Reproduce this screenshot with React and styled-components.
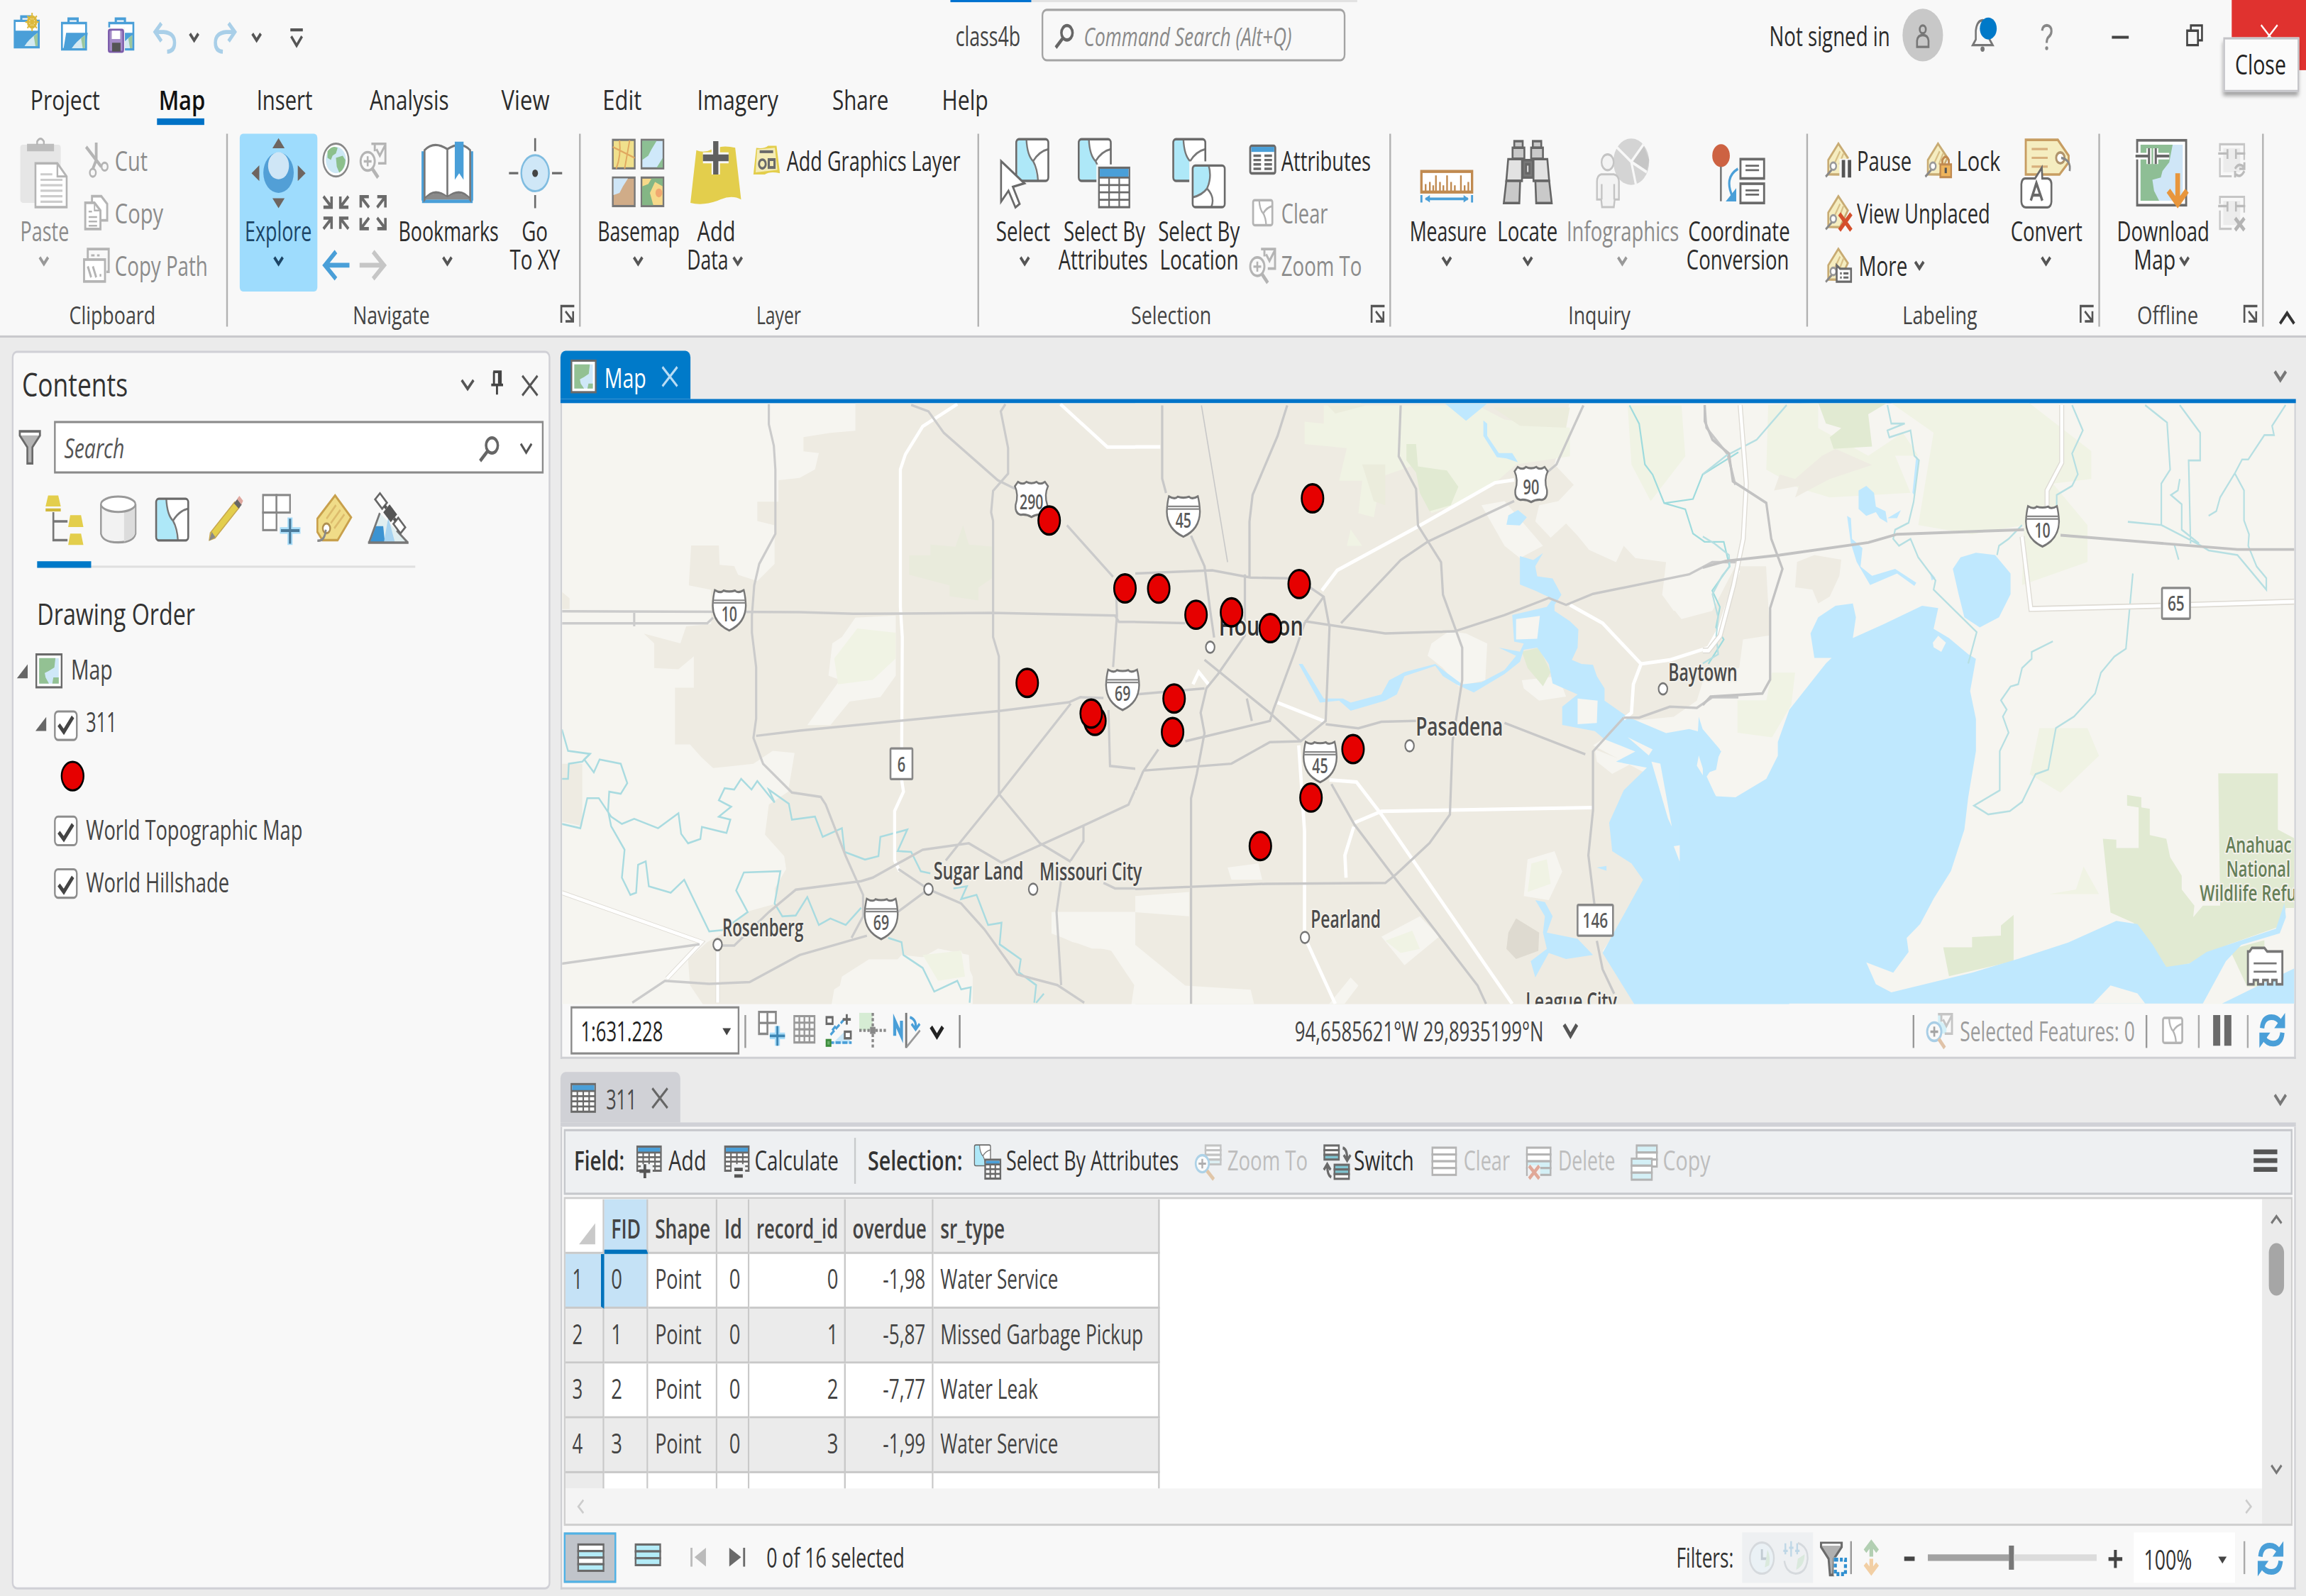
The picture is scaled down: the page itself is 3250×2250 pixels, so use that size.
import React, { useLayoutEffect, useRef, useState } from "react";
import styled, { createGlobalStyle } from "styled-components";

/* The window is laid out at 1366 x 728 and stretched to the display. */
const Global = createGlobalStyle`
  html, body { margin: 0; padding: 0; background: #ebebeb; }
  * { box-sizing: border-box; }
`;
const Display = styled.div`
  width: 3250px;
  height: 2250px;
  overflow: hidden;
`;
const Window = styled.div`
  width: 1366px;
  height: 728px;
  transform: scale(2.3792, 3.0907);
  transform-origin: 0 0;
  overflow: hidden;
  background: #ebebeb;
  color: #323232;
  font-family: "Open Sans", "Noto Sans", sans-serif;
  font-size: 12.4px;
  display: flex;
  flex-direction: column;
`;

/* ---------- text ---------- */
const TextBox = styled.span`
  display: inline-block;
  flex: none;
  width: ${(p) => p.$w}px;
  margin-left: ${(p) => p.$ml || 0}px;
  line-height: 13px;
  white-space: nowrap;
  font-size: ${(p) => p.$fs || 12.4}px;
  font-weight: ${(p) => p.$weight || 400};
  font-style: ${(p) => (p.$italic ? "italic" : "normal")};
  color: ${(p) => p.$color || "inherit"};
`;
const TextInk = styled.span`
  display: inline-block;
  margin-left: -0.6px;
  transform-origin: 0 50%;
`;
function T({ w, children, ml, fs, weight, italic, color }) {
  const ink = useRef(null);
  const [k, setK] = useState(1);
  useLayoutEffect(() => {
    const natural = ink.current.offsetWidth;
    const exact = ink.current.getBoundingClientRect().width / 2.3792;
    setK((w + 1.2) / (exact || natural));
  }, [w]);
  return (
    <TextBox $w={w} $ml={ml} $fs={fs} $weight={weight} $italic={italic} $color={color}>
      <TextInk ref={ink} style={{ transform: `scaleX(${k})` }}>{children}</TextInk>
    </TextBox>
  );
}

/* ---------- icons ---------- */
const Svg = styled.svg`
  display: block;
  flex: none;
  overflow: visible;
  width: ${(p) => p.$w}px;
  height: ${(p) => p.$h}px;
  margin-left: ${(p) => p.$ml || 0}px;
  margin-top: ${(p) => p.$mt || 0}px;
  opacity: ${(p) => p.$o || 1};
`;
const I = ({ w = 16, h, ml, mt, o, children }) => (
  <Svg $w={w} $h={h || w} $ml={ml} $mt={mt} $o={o} viewBox={`0 0 ${w} ${h || w}`} fill="none">
    {children}
  </Svg>
);
const G = "#6a6a6a";
const LG = "#b4b4b4";
const BL = "#4a9fd8";
const CY = "#aee8f8";
const YE = "#e3ce4c";

const Chev = ({ c = "#555", ml, mt, w = 6, h = 4, sw = 1.5 }) => (
  <I w={w} h={h} ml={ml} mt={mt}><path d={`M.5 .4L${w / 2} ${h - 0.6}L${w - 0.5} .4`} stroke={c} strokeWidth={sw} /></I>
);
const Cross = ({ c = "#555", ml, mt, s = 10, sw = 1.2 }) => (
  <I w={s} ml={ml} mt={mt}><path d={`M.4 .4L${s - 0.4} ${s - 0.4}M${s - 0.4} .4L.4 ${s - 0.4}`} stroke={c} strokeWidth={sw} /></I>
);
const Search = ({ c = "#666", s = 11, ml }) => (
  <I w={s} ml={ml}><circle cx={s * 0.64} cy={s * 0.36} r={s * 0.3} stroke={c} strokeWidth="1.5" /><path d={`M${s * 0.42} ${s * 0.58}L.4 ${s - 0.3}`} stroke={c} strokeWidth="1.7" /></I>
);
const Launcher = () => (
  <I w={8.4}><path d="M.5 8.2V.6H8.2" stroke="#555" strokeWidth="1.1" /><path d="M3 3L7 7M7.5 3V7.6H3" stroke="#555" strokeWidth="1.1" /></I>
);
const TriDown = ({ ml }) => <I w={5} h={3} ml={ml}><path d="M0 0H5L2.5 3.2Z" fill="#444" /></I>;
const Refresh = ({ ml }) => (
  <I w={16} ml={ml}>
    <path d="M2 7Q2.6 2 7.5 2Q11 2 12.8 4.4" stroke={BL} strokeWidth="2.6" /><path d="M15.6 0V7H9.2Z" fill={BL} />
    <path d="M14 9Q13.4 14 8.5 14Q5 14 3.2 11.6" stroke={BL} strokeWidth="2.6" /><path d="M.4 16V9H6.8Z" fill={BL} />
  </I>
);
/* Layer polygons shared by the selection icons */
const Poly = ({ x = 0, y = 0, s = 1, gray }) => (
  <g transform={`translate(${x} ${y}) scale(${s})`}>
    <rect x=".5" y=".5" width="19" height="19" rx="1.6" fill="#fff" />
    {!gray && <path d="M1 1H6.5Q7 8 10 10Q12 14 13 19.5H1Z" fill={CY} />}
    <path d="M6.5 .5Q7 8 10.5 10.5Q13 14 13.4 19.5M10.5 10.5Q14 6 19.5 5" stroke={gray ? LG : "#777"} strokeWidth={gray ? 1.6 : 1} />
    <rect x=".5" y=".5" width="19" height="19" rx="1.6" stroke={gray ? LG : G} strokeWidth={gray ? 1.9 : 1.1} />
  </g>
);
const Grid = ({ x, y, w, h, head = BL, c = G, cols = 4, rows = 4 }) => (
  <g transform={`translate(${x} ${y})`}>
    <rect width={w} height={h} fill="#fff" stroke={c} />
    <rect x=".5" y=".5" width={w - 1} height={h * 0.22} fill={head} />
    {Array.from({ length: cols - 1 }, (_, i) => <path key={"c" + i} d={`M${((i + 1) * w) / cols} ${h * 0.25}V${h}`} stroke={c} strokeWidth=".9" />)}
    {Array.from({ length: rows }, (_, i) => <path key={"r" + i} d={`M0 ${h * 0.25 + (i * h * 0.75) / rows}H${w}`} stroke={c} strokeWidth=".9" />)}
  </g>
);
const Rows = ({ x = 0, y = 0, w = 14, h = 12, c = G, fills }) => (
  <g transform={`translate(${x} ${y})`}>
    {fills.map((f, i) => <rect key={i} x=".5" y={0.5 + (i * h) / fills.length} width={w - 1} height={h / fills.length} fill={f} stroke={c} strokeWidth="1" />)}
  </g>
);
const TagShape = () => (
  <>
    <path d="M8 .5L2 8V14.5L9 14.6L13.6 7Z" fill="#f5edc0" stroke="#c8ab73" strokeWidth="1.1" />
    <path d="M9 4L6 9M11 5L8.5 10" stroke="#d8c088" strokeWidth=".9" />
    <circle cx="5" cy="10.8" r="1.7" fill="#fff" stroke="#999" /><path d="M4 12.5L.5 15.6" stroke="#888" strokeWidth="1.1" />
  </>
);
const MiniMap = ({ s = 16, ml }) => (
  <I w={s} ml={ml}>
    <rect x=".5" y=".5" width={s - 1} height={s - 1} fill="#fff" stroke={G} />
    <rect x="2.2" y="2.2" width={s - 4.4} height={s - 4.4} fill="#cfe8f8" />
    <path d={`M2.2 2.2H${s * 0.74}L${s * 0.7} 6.5L8 8L5.5 9L6 11L8 ${s - 2.2}H2.2Z`} fill="#93c193" />
    <path d={`M10 ${s - 2.2}L10.6 11H${s - 2.2}V${s - 2.2}Z`} fill="#93c193" />
  </I>
);
const ZoomSel = ({ color, ml }) => (
  <I ml={ml} w={16}>
    <g opacity={color ? 0.75 : 1}>
      {color && <path d="M7 .6H9V4L12 6V9.5H7Z" fill="#c8eef8" />}
      <path d="M7 .6H15.3V9.5H11M9 .6V4M10 3L12 6L15 1.5" stroke={LG} fill="none" strokeWidth="1.2" />
      <circle cx="4.8" cy="8.6" r="4.2" fill="#fafafa" stroke={color ? "#8fc1e0" : LG} strokeWidth="1.2" />
      <path d="M2.5 8.6H7.1M4.8 6.3V10.9" stroke={color ? "#888" : LG} strokeWidth="1.1" />
      <path d="M7.4 11.8L11 16" stroke={color ? "#d8b08c" : LG} strokeWidth="1.8" />
    </g>
  </I>
);
const Briefcase = ({ open }) => (
  <>
    <path d="M.7 2.5V14.5H15V2.5Z" fill="#fff" stroke={BL} strokeWidth="1.1" />
    <path d="M4.6 2.4V.6H10V2.4" stroke={BL} strokeWidth="1.3" />
    <path d={open ? "M3.2 7H16L14.5 14.8H1.5Z" : "M.5 7H15.2V14.8H.5Z"} fill={BL} />
    <path d="M6.5 14Q9 11 14.3 8V14Z" fill="#d5eaf2" /><path d="M12 9.5L14.3 8V14H13Z" fill="#9cc79c" />
  </>
);

/* ---------- header ---------- */
const Header = styled.header`
  height: 154px;
  flex: none;
  background: #f8f8f8;
  border-bottom: 1px solid #c9c9cc;
  display: flex;
  flex-direction: column;
`;
const LoadStrip = styled.div`
  height: 1px;
  flex: none;
  display: flex;
  padding-left: 563px;
`;
const StripPart = styled.div`
  width: ${(p) => p.$w}px;
  background: ${(p) => p.$c};
`;
const TitleBar = styled.div`
  height: 32px;
  margin-top: -1px;
  flex: none;
  display: flex;
  align-items: center;
  padding-left: 8px;
`;
const CommandBox = styled.div`
  width: 180px;
  height: 24.4px;
  margin-left: 13.5px;
  border: 1px solid #a4a4a4;
  border-radius: 3px;
  display: flex;
  align-items: center;
  padding: 1.8px 0 0 7px;
`;
const Avatar = styled.div`
  width: 24px;
  height: 24px;
  margin-left: 8px;
  border-radius: 50%;
  background: #c8c8c8;
  display: grid;
  place-items: center;
`;
const CloseButton = styled.div`
  position: relative;
  width: 44px;
  height: 32px;
  margin-left: auto;
  background: #e0322f;
  display: grid;
  place-items: center;
`;
const Tooltip = styled.div`
  position: absolute;
  left: -5px;
  top: 17px;
  width: 45px;
  height: 24.6px;
  padding-top: 1.2px;
  background: #fbfbfb;
  border: 0.6px solid #c4c4c8;
  box-shadow: 0 2px 2px rgba(0, 0, 0, 0.35);
  display: grid;
  place-items: center;
  color: #222;
`;
const TabRow = styled.nav`
  display: flex;
  height: 24.5px;
  margin-top: 1px;
  padding-left: 18.2px;
`;
const Tab = styled.div`
  margin-left: ${(p) => p.$ml}px;
  display: flex;
  align-items: center;
  position: relative;
  color: ${(p) => (p.$on ? "#111" : "#2b2b2b")};
  &::after {
    content: "";
    display: ${(p) => (p.$on ? "block" : "none")};
    position: absolute;
    left: -1.2px;
    right: -0.4px;
    bottom: 0.2px;
    height: 3px;
    background: #0072c6;
  }
`;
const tabs = [
  ["Project", 40, 0], ["Map", 26.4, 36.3], ["Insert", 31.9, 32.2], ["Analysis", 45.7, 34.3], ["View", 27.3, 33],
  ["Edit", 21.9, 32], ["Imagery", 46.8, 34.4], ["Share", 32.2, 33.1], ["Help", 26.2, 32.8],
];

const Ribbon = styled.div`
  display: flex;
  padding-top: 3px;
  height: 95px;
`;
const Group = styled.section`
  width: ${(p) => p.$w}px;
  display: flex;
  flex-direction: column;
`;
const GroupBody = styled.div`
  height: 72px;
  flex: none;
  display: flex;
`;
const Caption = styled.div`
  height: 14px;
  margin-top: 4.1px;
  display: flex;
  align-items: center;
  padding-left: ${(p) => p.$pl}px;
  color: #444;
`;
const LaunchSlot = styled.div`
  margin-left: auto;
  margin-right: ${(p) => p.$mr || 3}px;
`;
const Separator = styled.div`
  width: 1px;
  flex: none;
  height: ${(p) => p.$h}px;
  margin-top: ${(p) => p.$mt || 0}px;
  margin-left: ${(p) => p.$ml || 0}px;
  background: ${(p) => p.$c || "#b2b2b2"};
`;
const BigButton = styled.div`
  width: ${(p) => p.$w}px;
  height: 72px;
  margin-left: ${(p) => p.$ml}px;
  flex: none;
  padding-top: 2.7px;
  display: flex;
  flex-direction: column;
  align-items: center;
  border-radius: 2px;
  background: ${(p) => (p.$on ? "#9edcfd" : "transparent")};
  color: ${(p) => (p.$off ? "#8c8c8c" : p.$on ? "#1c4566" : "#2b2b2b")};
`;
const IconSlot = styled.div`
  height: 32px;
  margin-bottom: 3.6px;
`;
const Line = styled.div`
  height: 13px;
  display: flex;
  align-items: center;
`;
const SmallColumn = styled.div`
  margin-left: ${(p) => p.$ml}px;
  width: ${(p) => (p.$w ? p.$w + "px" : "auto")};
  flex: none;
  display: grid;
  grid-template-rows: repeat(3, 24px);
`;
const SmallRow = styled.div`
  display: flex;
  align-items: center;
  gap: 3.9px;
  padding-top: 1.2px;
  color: ${(p) => (p.$off ? "#8c8c8c" : "#2b2b2b")};
`;
const IconGrid = styled.div`
  margin-left: ${(p) => p.$ml}px;
  flex: none;
  display: grid;
  grid-template: repeat(3, 24px) / repeat(${(p) => p.$cols || 2}, 16px);
  column-gap: 6px;
  align-items: center;
`;

function Big({ w, ml, on, off, icon, l1, l2, chev, inlineChev }) {
  return (
    <BigButton $w={w} $ml={ml} $on={on} $off={off}>
      <IconSlot>{icon}</IconSlot>
      <Line><T w={l1[1]}>{l1[0]}</T></Line>
      <Line>
        {l2 && <T w={l2[1]}>{l2[0]}</T>}
        {inlineChev && <Chev ml={3.2} mt={1.4} />}
        {chev && <Chev mt={1.6} c={off ? "#999" : on ? "#1c4566" : "#555"} />}
      </Line>
    </BigButton>
  );
}

const PasteIcon = (
  <I w={32}>
    <rect x="2" y="3" width="24" height="26.5" rx="1.5" fill="#e6e6e6" />
    <rect x="6" y="2.6" width="16" height="3.4" fill="#bdbdbd" /><path d="M12 3V1.5Q14 -1 16 1.5V3" stroke={LG} />
    <path d="M11 11.5H24L29.5 17.5V31.5H11Z" fill="#fff" stroke={LG} strokeWidth="1.1" /><path d="M24 11.5V17.5H29.5" stroke={LG} />
    <path d="M14 16.5H21M14 19H27M14 21.5H27M14 24H27M14 26.5H27M14 29H27" stroke="#ccc" />
  </I>
);
const CutIcon = <I><path d="M2 2L11 11M8 0V8L6 12" stroke={LG} strokeWidth="1.6" /><circle cx="13" cy="11" r="1.8" stroke={LG} /><circle cx="6" cy="13.8" r="1.8" stroke={LG} /></I>;
const CopyIcon = (
  <I>
    <path d="M5.5 .5H11L14.5 4V11.5H5.5Z" fill="#fff" stroke={LG} strokeWidth="1.2" /><path d="M1.5 3.5H7L10.5 7V15.5H1.5Z" fill="#fff" stroke={LG} strokeWidth="1.2" />
    <path d="M7 3.5V7H10.5M3.5 7.5H5.5M3.5 10H8.5M3.5 12H8.5M3.5 14H8.5" stroke={LG} strokeWidth=".8" />
  </I>
);
const CopyPathIcon = (
  <I>
    <path d="M3 5V.6H15.4V11H14" stroke={LG} strokeWidth="1.2" /><path d="M5 3.5H7M8.5 3.5H10" stroke={LG} />
    <rect x=".8" y="5.4" width="12.4" height="10" fill="#fff" stroke={LG} strokeWidth="1.2" /><path d="M3 8.5L5 13.5M6 8.5L8 13.5M10 12.6H11" stroke={LG} strokeWidth="1.2" />
  </I>
);
const ExploreIcon = (
  <I w={32}>
    <path d="M16 0L19.6 4.6H12.4ZM16 32L19.6 27.4H12.4ZM0 16L4.6 12.4V19.6ZM32 16L27.4 12.4V19.6Z" fill="#6e6560" />
    <ellipse cx="16" cy="15.8" rx="9" ry="9.2" fill="#529fd6" /><circle cx="16" cy="12.6" r="6.2" fill="#cfe6f6" />
  </I>
);
const GlobeIcon = (
  <I><circle cx="8" cy="8" r="7.5" fill="#fff" stroke="#888" /><circle cx="8" cy="8" r="6" fill="#cde8f5" /><path d="M3 4Q6 1 9 2.5L8 5L6 6L5 8L3 7ZM8 7L12 6L13.6 8Q13.5 12 10 13.8L8.5 11Z" fill="#8cc08c" /></I>
);
const arrowIn = "M.6 .6L5 5M5.4 .6V5.5H.6";
const arrowOut = "M5.6 5.6L1 1M.7 5.6V.7H5.5";
const corners = [undefined, "translate(16 0) scale(-1 1)", "translate(0 16) scale(1 -1)", "translate(16 16) scale(-1 -1)"];
const Corners = ({ d }) => <I>{corners.map((t, n) => <path key={n} transform={t} d={d} stroke={G} strokeWidth="1.5" />)}</I>;
const BackIcon = <I><path d="M1 8H16M8 1.8L1.5 8L8 14.2" stroke={BL} strokeWidth="2.2" /></I>;
const NextIcon = <I><path d="M0 8H15M8 1.8L14.5 8L8 14.2" stroke="#c6c6c6" strokeWidth="2.2" /></I>;
const BookIcon = (
  <I w={32}>
    <path d="M1.5 28.5V6M30.5 28.5V6M1 28.8H31" stroke={BL} strokeWidth="1.6" />
    <path d="M2.5 5.5Q8 1 16 5V27Q8 22 2.5 28ZM16 5Q24 1 29.5 5.5V28Q24 22 16 27Z" fill="#fff" stroke="#777" strokeWidth="1.1" />
    <path d="M2.5 28Q8 23 16 27Q24 23 29.5 28Z" fill="#8a8a8a" /><path d="M20.4 1.6H25.6V19L23 16L20.4 19Z" fill={BL} />
  </I>
);
const GoIcon = (
  <I w={32}>
    <circle cx="16" cy="16" r="8.2" fill="#cfe7f7" stroke="#7fbce0" /><circle cx="16" cy="16" r="1.7" fill="#444" />
    <path d="M16 0V6M16 26V32M.5 16H6M26 16H32" stroke={G} strokeWidth="1.1" />
  </I>
);
const BasemapIcon = (
  <I w={32}>
    <rect x="1" y=".8" width="13" height="13" fill="#f0e08c" stroke="#777" /><path d="M1 4L14 9M5 1Q6 8 3 14M11 1L8 14" stroke="#e0a860" strokeWidth=".8" />
    <rect x="18" y=".8" width="13" height="13" fill="#cfe8fa" stroke="#777" /><path d="M18.4 1.2H27L24 5L22 8L18.4 10ZM27 13.4L30.6 9V13.4Z" fill="#8cbf93" />
    <rect x="1" y="18" width="13" height="13" fill="#d0ac88" stroke="#777" /><path d="M1.4 18.4H10L7 22L5 25L1.4 26Z" fill="#cfe6f7" />
    <rect x="18" y="18" width="13" height="13" fill="#f6d98a" stroke="#777" /><path d="M18.4 22L22 21L24 18.4H30.6V22L26 20L23 25L25 30.6H18.4Z" fill="#84b685" /><circle cx="28.3" cy="25" r="2" fill="#f0a870" />
  </I>
);
const AddDataIcon = (
  <I w={32}>
    <path d="M4.5 5.5Q9 7 14 5Q20 3 27.5 4.4L31 28Q25 25.5 17 28.6Q8 31 1 29.5Z" fill={YE} />
    <path d="M16 1.4V16.6M8.4 9H23.6" stroke="#f8f8f8" strokeWidth="5" /><path d="M16 1.4V16.6M8.4 9H23.6" stroke="#5f5f5f" strokeWidth="3.1" />
  </I>
);
const GraphicsIcon = (
  <I><path d="M2 2.5Q7 3 9 1.5H14L16 14Q10 13 7 14.6H.3Z" fill={YE} /><path d="M2.5 3.2L13 2.4L14.5 12.5L1.6 13.6Z" fill="#f4ecb6" /><path d="M4 4.2H12" stroke={G} strokeWidth="1.3" /><circle cx="5.6" cy="9.8" r="2" stroke={G} strokeWidth="1.2" /><rect x="9.4" y="7.8" width="3.4" height="3.6" stroke={G} strokeWidth="1.3" /></I>
);
const SelectIcon = <I w={32}><Poly x={10.5} /><path d="M2 10.5V29L6.4 24L10.5 31.6L13 30L9 22.2L15.8 20.6Z" fill="#fff" stroke={G} strokeWidth="1.1" /></I>;
const SelAttrIcon = <I w={32}><Poly x={0.5} /><rect x="11.5" y="12" width="21" height="20" fill="#f8f8f8" /><Grid x={13} y={13.5} w={18} h={18} cols={3} rows={4} /></I>;
const SelLocIcon = <I w={32}><Poly x={0.5} /><rect x="10.5" y="10.6" width="22" height="22" fill="#f8f8f8" /><g transform="translate(12 12)"><rect x=".5" y=".5" width="19" height="19" rx="1.6" fill="#fff" /><path d="M1 1H10Q12 6 9 11Q6 14 1 15Z" fill={CY} /><path d="M10 .5Q12 6 9 11Q6 14 .5 15M9 11Q14 15 11.5 19.5" stroke="#777" /><rect x=".5" y=".5" width="19" height="19" rx="1.6" stroke={G} strokeWidth="1.1" /></g></I>;
const AttrIcon = <I><rect x=".6" y="1.5" width="14.8" height="12.6" rx="1" fill="#fff" stroke={G} strokeWidth="1.2" /><rect x="1.2" y="2" width="13.6" height="2.3" fill={BL} /><path d="M2.5 6H7M2.5 8H7M2.5 10H7M2.5 12H7M9 6H13.5M9 8H13.5M9 10H13.5M9 12H13.5" stroke={G} strokeWidth="1.1" /></I>;
const ClearIcon = <I><Poly x={2} y={2} s={0.6} gray /></I>;
const MeasureIcon = (
  <I w={32}>
    <rect x="1" y="15.2" width="30" height="9.4" fill="#fff" stroke="#c08a50" strokeWidth="1.4" />
    <path d="M3.5 24V21M6 24V20M8 24V21.5M9.6 24V17M12 24V20M14 24V21.5M16.2 24V17M18.6 24V20M20.8 24V21.5M24.4 24V17M26.6 24V21.5M28.8 24V20" stroke="#c08a50" />
    <path d="M1 26V29.4M31 26V29.4M3.5 27.7H28.5" stroke={BL} strokeWidth="1.2" /><path d="M3 27.7L6 26V29.4ZM29 27.7L26 26V29.4Z" fill={BL} />
  </I>
);
const LocateIcon = (
  <I w={32}>
    <g stroke="#666" strokeWidth="1.1" fill="#c9c9c9">
      <rect x="8" y="1.4" width="5" height="3" /><rect x="19" y="1.4" width="5" height="3" />
      <rect x="7" y="4.4" width="7" height="5" /><rect x="18" y="4.4" width="7" height="5" />
      <path d="M4.4 9.6H12.6V19.5H3.3ZM19.4 9.6H27.6L28.7 19.5H19.4Z" fill="#e2e2e2" /><path d="M3.3 19.5H11.5L11 29.6H1.8ZM20.5 19.5H28.7L30.2 29.6H21Z" />
      <path d="M13 10H19V18H13Z" fill="#777" /><path d="M15 12H17V16H15Z" fill="#ddd" />
    </g>
  </I>
);
const InfoIcon = (
  <I w={32}>
    <circle cx="21.3" cy="10.8" r="10.6" fill="#d4d4d4" /><path d="M21.3 10.8L28.5 3L31.9 10L30.5 15.5Z" fill="#c6c6c6" /><path d="M21.3 10.8L12.5 4M21.3 10.8L28.5 3M21.3 10.8L30.5 15.5M21.3 10.8L24 21" stroke="#f8f8f8" strokeWidth="1.3" />
    <circle cx="7.3" cy="11" r="3.6" fill="#f3f3f3" stroke="#c4c4c4" /><path d="M3.5 16.5H11Q14 17 14 20V28H11.5L11 31.5H4L3.5 28H1V20Q1 17 3.5 16.5ZM3.8 21V28M11.2 21V28" fill="#f3f3f3" stroke="#c4c4c4" />
  </I>
);
const CoordIcon = (
  <I w={32}>
    <circle cx="5.5" cy="8" r="5.2" fill="#cd6242" /><path d="M5.4 13V28.8" stroke="#777" strokeWidth="1.1" />
    <path d="M15.5 14Q7 18 12.5 27" stroke={BL} strokeWidth="1.3" /><path d="M9.5 28.4L14 28.4V24Z" fill={BL} stroke={BL} />
    {[9.6, 20.8].map((y) => <g key={y}><rect x="17" y={y} width="14" height="8.8" fill="#fff" stroke={G} strokeWidth="1.2" /><path d={`M20 ${y + 3}H28M20 ${y + 5}H28`} stroke={G} strokeWidth=".9" /></g>)}
  </I>
);
const TagPause = <I><TagShape /><rect x="8.6" y="7.4" width="8" height="9" fill="#f8f8f8" /><path d="M11 8V16M14.6 8V16" stroke="#555" strokeWidth="2" /></I>;
const TagLock = <I><TagShape /><path d="M10.6 10V8Q12.6 5 14.4 8V10" stroke="#c08a50" strokeWidth="1.2" /><rect x="9.4" y="10" width="6.4" height="5.8" fill="#eeb45c" stroke="#c08a50" /><path d="M12.6 11.5V14" stroke="#555" strokeWidth="1.3" /></I>;
const TagX = <I><TagShape /><path d="M8.6 8.5L15.6 16M15.6 8.5L8.6 16" stroke="#d4502c" strokeWidth="2" /></I>;
const TagMore = <I><TagShape /><path d="M7 8L9 9.6H15.5V15.5H7Z" fill="#fff" stroke={G} strokeWidth="1.1" /><path d="M9 11.7H10M11 11.7H14M9 13.6H10M11 13.6H14" stroke={G} /></I>;
const ConvertIcon = (
  <I w={32}>
    <path d="M4 .8H23L29.4 8V11L24 16.6H4Z" fill="#f5edc0" stroke="#c79d62" strokeWidth="1.2" /><path d="M7.5 5H17M7.5 9H17M7.5 13H17" stroke="#d8b07c" />
    <circle cx="24.5" cy="9" r="2.5" fill="#fff" stroke="#b0946c" strokeWidth="1.2" /><path d="M25 9Q31 10 30 15" stroke="#888" strokeWidth="1.1" />
    <path d="M3.5 18.4H9.5L13.5 13.5L13.8 18.4H17Q19.2 18.8 19.2 21V29Q19 31.4 16.8 31.6H4Q1.6 31.4 1.4 29V21Q1.6 18.6 3.5 18.4Z" fill="#fff" stroke={G} strokeWidth="1.1" />
    <path d="M7 28.5L10.3 20.5L13.8 28.5M8.4 26H12.3" stroke={G} strokeWidth="1.4" />
  </I>
);
const DownloadIcon = (
  <I w={32}>
    <rect x="1" y="1" width="29" height="29.6" fill="#fff" stroke={G} strokeWidth="1.2" /><rect x="3" y="3" width="25" height="25.6" fill="#cfe6f7" />
    <path d="M3 3H22L20 11L16 15L15 18L10 19L11 24L14 28.6H3Z" fill="#8ebe95" />
    <path d="M-1 8.2H8M12 8.2H20M8 4.6V11.8M12 4.6V11.8" stroke="#fff" strokeWidth="3" /><path d="M0 8.2H8M12 8.2H20M8 4.6V11.8M12 4.6V11.8" stroke={G} strokeWidth="1.3" />
    <path d="M25 16V30M19.5 24L25 30L30.5 24" stroke="#e8963c" strokeWidth="2.8" />
  </I>
);
const OfflineBase = () => (
  <><rect x="3" y="2.6" width="10" height="11" fill="#ececec" /><path d="M1 4V.8H15.4V8M1 7V15.4H8" stroke="#c6c6c6" /><path d="M0 5H5M11 5H16M5.5 3V7.5M10.5 3V7.5" stroke="#bbb" strokeWidth="1.1" /></>
);
const OffSync = <I><OfflineBase /><path d="M10 12Q12 9 15 11M15.5 9V12H12.5M15.5 13Q13 16.5 10.5 14.5M10 16V13" stroke="#bbb" strokeWidth="1.2" /></I>;
const OffX = <I><OfflineBase /><path d="M10 10.5L15.5 16M15.5 10.5L10 16" stroke="#b4b4b4" strokeWidth="1.8" /></I>;

function RibbonBar() {
  const sep = <Separator $h={87.3} $mt={0.8} />;
  return (
    <Ribbon>
      <Group $w={134}>
        <GroupBody>
          <Big w={40.5} ml={6} off chev icon={PasteIcon} l1={["Paste", 27.7]} />
          <SmallColumn $ml={2}>
            <SmallRow $off>{CutIcon}<T w={18.3}>Cut</T></SmallRow>
            <SmallRow $off>{CopyIcon}<T w={27.5}>Copy</T></SmallRow>
            <SmallRow $off>{CopyPathIcon}<T w={53.9}>Copy Path</T></SmallRow>
          </SmallColumn>
        </GroupBody>
        <Caption $pl={41.8}><T w={49.9} fs={11.4}>Clipboard</T></Caption>
      </Group>
      {sep}
      <Group $w={208}>
        <GroupBody>
          <Big w={46} ml={7} on chev icon={ExploreIcon} l1={["Explore", 38.5]} />
          <IconGrid $ml={3}>{GlobeIcon}<ZoomSel /><Corners d={arrowIn} /><Corners d={arrowOut} />{BackIcon}{NextIcon}</IconGrid>
          <Big w={60} ml={6.3} chev icon={BookIcon} l1={["Bookmarks", 58.2]} />
          <Big w={34} ml={4.6} icon={GoIcon} l1={["Go", 14.3]} l2={["To XY", 28.6]} />
        </GroupBody>
        <Caption $pl={74.3}><T w={44.4} fs={11.4}>Navigate</T><LaunchSlot $mr={2.8}><Launcher /></LaunchSlot></Caption>
      </Group>
      {sep}
      <Group $w={235}>
        <GroupBody>
          <Big w={50} ml={9.2} chev icon={BasemapIcon} l1={["Basemap", 47.4]} />
          <Big w={34} ml={4} inlineChev icon={AddDataIcon} l1={["Add", 21.4]} l2={["Data", 23.2]} />
          <SmallColumn $ml={5}><SmallRow>{GraphicsIcon}<T w={101.7} ml={0.8}>Add Graphics Layer</T></SmallRow></SmallColumn>
        </GroupBody>
        <Caption $pl={104.6}><T w={25.3} fs={11.4}>Layer</T></Caption>
      </Group>
      {sep}
      <Group $w={243}>
        <GroupBody>
          <Big w={33} ml={10} chev icon={SelectIcon} l1={["Select", 30.9]} />
          <Big w={53} ml={4.2} icon={SelAttrIcon} l1={["Select By", 47.2]} l2={["Attributes", 51.8]} />
          <Big w={49} ml={5.4} icon={SelLocIcon} l1={["Select By", 47.2]} l2={["Location", 45.5]} />
          <SmallColumn $ml={5.4}>
            <SmallRow>{AttrIcon}<T w={51.9}>Attributes</T></SmallRow>
            <SmallRow $off>{ClearIcon}<T w={26.4}>Clear</T></SmallRow>
            <SmallRow $off><ZoomSel /><T w={46.5}>Zoom To</T></SmallRow>
          </SmallColumn>
        </GroupBody>
        <Caption $pl={90.5}><T w={46.4} fs={11.4}>Selection</T><LaunchSlot $mr={2.8}><Launcher /></LaunchSlot></Caption>
      </Group>
      {sep}
      <Group $w={246}>
        <GroupBody>
          <Big w={46} ml={10.4} chev icon={MeasureIcon} l1={["Measure", 44.4]} />
          <Big w={36} ml={6.2} chev icon={LocateIcon} l1={["Locate", 34.5]} />
          <Big w={67} ml={4.9} off chev icon={InfoIcon} l1={["Infographics", 65.4]} />
          <Big w={61} ml={4.7} icon={CoordIcon} l1={["Coordinate", 59.1]} l2={["Conversion", 59.6]} />
        </GroupBody>
        <Caption $pl={105.6}><T w={35.6} fs={11.4}>Inquiry</T></Caption>
      </Group>
      {sep}
      <Group $w={172}>
        <GroupBody>
          <SmallColumn $ml={10.2} $w={103.7}>
            <SmallRow>{TagPause}<T w={31.2}>Pause</T><I w={0.1} ml={-0.6} />{TagLock}<T w={24.8}>Lock</T></SmallRow>
            <SmallRow>{TagX}<T w={77.7}>View Unplaced</T></SmallRow>
            <SmallRow>{TagMore}<T w={27.7} ml={1}>More</T><Chev /></SmallRow>
          </SmallColumn>
          <Big w={43} ml={5.6} chev icon={ConvertIcon} l1={["Convert", 41.3]} />
        </GroupBody>
        <Caption $pl={56.6}><T w={43} fs={11.4}>Labeling</T><LaunchSlot $mr={2.8}><Launcher /></LaunchSlot></Caption>
      </Group>
      {sep}
      <Group $w={96}>
        <GroupBody>
          <Big w={56} ml={9} inlineChev icon={DownloadIcon} l1={["Download", 53.6]} l2={["Map", 23.6]} />
          <IconGrid $ml={4.6} $cols={1}>{OffSync}{OffX}</IconGrid>
        </GroupBody>
        <Caption $pl={22.8}><T w={35} fs={11.4}>Offline</T><LaunchSlot $mr={2.8}><Launcher /></LaunchSlot></Caption>
      </Group>
      {sep}
      <I w={9.6} h={6} mt={81.6} ml={8.6}><path d="M.6 5.6L4.8 .8L9 5.6" stroke="#333" strokeWidth="1.5" /></I>
    </Ribbon>
  );
}

function Top() {
  return (
    <Header>
      <LoadStrip><StripPart $w={48} $c="#0072d0" /><StripPart $w={193} $c="#e2e2e2" /></LoadStrip>
      <TitleBar>
        <I mt={-1.6}><Briefcase /><circle cx="11" cy="3" r="2.4" fill="#fbf4c8" stroke="#dcb93c" strokeWidth="1.3" /><path d="M11 -1.2V7.2M7 3H15M8.2 .2L13.8 5.8M13.8 .2L8.2 5.8" stroke="#dcb93c" strokeWidth=".8" /></I>
        <I ml={12} mt={-0.6}><Briefcase open /></I>
        <I ml={12.3} mt={-0.6}><Briefcase /><rect x="-.5" y="4.5" width="10.5" height="11" fill="#f8f8f8" /><rect x=".4" y="5.6" width="8.6" height="10" rx=".8" fill="#a58cc8" stroke="#7c5cab" /><rect x="2.2" y="6" width="5" height="3.8" fill="#fff" /><rect x="2.4" y="11.5" width="5" height="4" fill="#555" /></I>
        <I ml={10.4} w={14} mt={1}><path d="M.8 4.6H6Q12.4 5 12.4 9.5Q12.4 13.4 8 13.6M4.6 .6L.9 4.6L4.6 8.8" stroke="#a9cfe8" strokeWidth="1.9" /></I>
        <Chev ml={7.4} mt={1} />
        <I ml={8} w={14} mt={1}><path d="M13.2 4.6H8Q1.6 5 1.6 9.5Q1.6 13.4 6 13.6M9.4 .6L13.1 4.6L9.4 8.8" stroke="#a9cfe8" strokeWidth="1.9" /></I>
        <Chev ml={8.8} mt={1} />
        <I ml={16.8} w={7.4} h={8.5} mt={1.6}><path d="M0 .6H7.4M.5 3.6L3.7 7.8L6.9 3.6" stroke="#555" strokeWidth="1.4" /></I>
        <T ml={387.4} w={37.3} color="#444">class4b</T>
        <CommandBox><Search /><T ml={6.5} w={122} italic color="#8a8a8a" fs={11.8}>Command Search (Alt+Q)</T></CommandBox>
        <T ml={251.5} w={70.4} color="#2b2b2b">Not signed in</T>
        <Avatar><I w={8} h={11}><circle cx="4" cy="2.4" r="1.8" stroke="#777" strokeWidth="1.1" /><path d="M.6 10.4V7.5Q1 5 4 5Q7 5 7.4 7.5V10.4Z" stroke="#777" strokeWidth="1.1" /></I></Avatar>
        <I w={15} ml={16.4} mt={-1}><path d="M.6 12.6H12.4L10.6 10V6Q10 1.4 6.5 1.2Q3 1.4 2.4 6V10Z" stroke="#777" strokeWidth="1.1" /><circle cx="6.4" cy="14.4" r="1.2" fill="#777" /><circle cx="9.8" cy="5" r="5" fill="#0079c8" /></I>
        <I w={7} h={12} ml={26.2} mt={1}><path d="M.7 3Q1 .7 3.5 .6Q6.2 .8 6.2 3.2Q6.2 4.8 4.6 5.8Q3.4 6.6 3.4 8.6" stroke="#888" strokeWidth="1.3" /><circle cx="3.4" cy="11" r=".9" fill="#888" /></I>
        <I w={10} h={2} ml={35.4} mt={1}><path d="M0 1H10" stroke="#444" strokeWidth="1.3" /></I>
        <I w={10} ml={34}><path d="M.6 3H7V9.6H.6ZM2.8 3V.6H9.4V7.4H7" stroke="#444" strokeWidth="1.1" /></I>
        <CloseButton>
          <Cross c="#fff" s={10.5} sw={0.9} />
          <Tooltip><T w={29}>Close</T></Tooltip>
        </CloseButton>
      </TitleBar>
      <TabRow>
        {tabs.map(([name, w, ml]) => (
          <Tab key={name} $ml={ml} $on={name === "Map"}><T w={w} weight={name === "Map" ? 600 : 400}>{name}</T></Tab>
        ))}
      </TabRow>
      <RibbonBar />
    </Header>
  );
}

/* ---------- contents pane ---------- */
const Workspace = styled.main`
  flex: 1;
  display: flex;
  padding: 5.8px 6.2px 0 6.7px;
  gap: 6.2px;
`;
const Pane = styled.aside`
  width: 319px;
  height: 564.8px;
  flex: none;
  background: #f8f8f8;
  border: 0.8px solid #d0d0d6;
  border-radius: 3px;
  display: flex;
  flex-direction: column;
`;
const PaneTitle = styled.div`
  height: 31px;
  display: flex;
  align-items: center;
  padding: 0 0 1px 5.7px;
`;
const SearchRow = styled.div`
  height: 24px;
  display: flex;
  align-items: center;
  padding-left: 3.4px;
`;
const SearchBox = styled.div`
  width: 290px;
  height: 24px;
  margin-left: 8px;
  border: 1px solid #8a8a8a;
  background: #fff;
  display: flex;
  align-items: center;
  padding: 1px 0 0 5px;
`;
const ViewTabs = styled.div`
  height: 43.4px;
  width: 224px;
  margin-left: 14.7px;
  border-bottom: 1.6px solid #e0e0e0;
  display: grid;
  grid-template-columns: repeat(7, 32px);
  padding-top: 9.4px;
`;
const ViewTab = styled.div`
  height: 34px;
  padding: 0 0 0 5px;
  border-bottom: ${(p) => (p.$on ? "3.4px solid #0079c8" : "none")};
`;
const Heading = styled.div`
  padding-left: 15.1px;
  height: 34.5px;
  padding-top: 12.6px;
`;
const TreeRow = styled.div`
  height: 24.1px;
  display: flex;
  align-items: center;
  color: #454545;
  padding-left: ${(p) => p.$pl}px;
`;
const Check = styled.div`
  width: 14px;
  height: 14px;
  margin-left: ${(p) => p.$ml || 0}px;
  margin-top: 2px;
  border: 1px solid #8e8e8e;
  border-radius: 2.4px;
  background: #fff;
  display: grid;
  place-items: center;
`;
const Tri = ({ ml }) => <I w={6.4} ml={ml}><path d="M6.4 0V6.4H0Z" fill="#666" /></I>;
const Tick = () => <I w={10} h={9}><path d="M.8 4.6L3.8 7.8L9.2 1" stroke="#444" strokeWidth="1.9" /></I>;

function Contents() {
  return (
    <Pane>
      <PaneTitle>
        <T w={61.5} fs={15}>Contents</T>
        <Chev ml={198} w={8} h={5} mt={0} sw={1.4} />
        <I ml={10.2} w={7} h={11} mt={-2}><path d="M1.2 .6H5.6V6.4M1.6 .6V6.4M0 6.6H7M3.4 7V11" stroke="#444" strokeWidth="1.2" /><path d="M4 1H5.6V6H4Z" fill="#444" /></I>
        <Cross ml={10.8} s={9.8} />
      </PaneTitle>
      <SearchRow>
        <I w={13.4} h={16}><path d="M.7 .7H12.7V2.6L8.2 8V15.4H5.2V8L.7 2.6Z" fill="#b4b4b4" stroke={G} strokeWidth="1.1" /><path d="M1.4 1.4H12V2.6H1.4Z" fill="#fff" /></I>
        <SearchBox><T w={34.5} italic color="#555">Search</T><Search ml={210.8} s={11.6} /><Chev ml={12.2} w={7.4} h={5} sw={1.2} /></SearchBox>
      </SearchRow>
      <ViewTabs>
        <ViewTab $on><I w={23}><path d="M1.5 1H7.5L9 6H0ZM14.6 10H21L22.4 15.4H13.4ZM14.6 18.4H21L22.4 23.6H13.4Z" fill={YE} /><path d="M0 7.6H9" stroke="#d0b83c" strokeWidth="1.4" /><path d="M4.6 8.6V21.4H13M4.6 12.8H13" stroke="#777" strokeWidth="1.1" /></I></ViewTab>
        <ViewTab><I w={23}><path d="M.8 5V18.5Q2 22.4 11 22.4Q20 22.4 21.3 18.5V5" fill="#f2f2f2" stroke="#999" /><path d="M14.5 8.6Q20 8 21 5V18.5Q20 21 14.5 22Z" fill="#dcdcdc" /><ellipse cx="11" cy="5" rx="10.2" ry="3.5" fill="#fff" stroke="#999" /></I></ViewTab>
        <ViewTab><I w={23}><Poly x={1} y={2} /></I></ViewTab>
        <ViewTab><I w={23}><path d="M1.6 18L16 4L18.6 6.6L4.4 20.4L1 21.4Z" fill="#e3ce4c" stroke="#c8a850" strokeWidth=".6" /><path d="M15.6 4.6L17.6 2.6L20.2 5.2L18.4 7Z" fill="#666" /><path d="M17.4 2.6L18.8 1.2L21 3.4L20 5.2Z" fill="#e0a8a0" /><path d="M1 21.6L2.4 17.6L4.6 20Z" fill="#888" /></I></ViewTab>
        <ViewTab><I w={23}><rect x=".8" y=".8" width="8" height="8" fill="#fff" stroke="#888" /><rect x="8.8" y=".8" width="8" height="8" fill="#fff" stroke="#888" /><rect x=".8" y="8.8" width="8" height="8" fill="#fff" stroke="#888" /><path d="M16.8 11V23.6M10.8 17H23" stroke="#a8dcf8" strokeWidth="3" /><path d="M16.8 11.6V23M11.4 17H22.4" stroke="#4a7a9a" strokeWidth="1.3" /></I></ViewTab>
        <ViewTab><I w={23}><path d="M11.5 1L21 11L13 21.4H4L1 17.6V11.6Z" fill="#f0dc88" stroke="#c8a04c" strokeWidth="1.1" /><path d="M12 5.4L6.4 11.6M14.6 7.6L9 13.6M17 9.6L11 16" stroke="#dcbb6c" /><circle cx="6.4" cy="16" r="2.2" fill="#fff" stroke="#b09050" /><path d="M6 16.6Q5.4 22 1 21.6" stroke="#888" strokeWidth="1.1" /></I></ViewTab>
        <ViewTab><I w={24} ml={-1}><path d="M1 22.5L7 9L23.6 22.5Z" fill="#e0eef0" /><path d="M1 22.5L4.6 15H9L10 22.5Z" fill="#3b93d2" /><path d="M12 11L16 22.5H9.4Z" fill="#a8d4f0" /><path d="M0 22.5H24M.6 22.5L7 9M17 17L23.6 22.5" stroke="#777" strokeWidth="1.1" /><g transform="rotate(46 13 9)"><rect x="10" y="6.4" width="6.4" height="5.2" fill="#555" /><rect x="2.4" y="7" width="6" height="4" fill="#fff" stroke="#666" /><rect x="18" y="7" width="6" height="4" fill="#fff" stroke="#666" /><path d="M8.4 9H10M16.4 9H18" stroke="#555" strokeWidth="1.6" /></g></I></ViewTab>
      </ViewTabs>
      <Heading><T w={92.4} fs={13.6}>Drawing Order</T></Heading>
      <TreeRow $pl={2.3}><Tri /><MiniMap ml={5} /><T ml={5.2} w={23.5}>Map</T></TreeRow>
      <TreeRow $pl={13.4}><Tri /><Check $ml={4.8}><Tick /></Check><T ml={5.2} w={17}>311</T></TreeRow>
      <TreeRow $pl={28.8}><I w={14}><circle cx="7" cy="7" r="6.5" fill="#e60000" stroke="#000" /></I></TreeRow>
      <TreeRow $pl={24.6}><Check><Tick /></Check><T ml={5.2} w={127}>World Topographic Map</T></TreeRow>
      <TreeRow $pl={24.6}><Check><Tick /></Check><T ml={5.2} w={83.6}>World Hillshade</T></TreeRow>
    </Pane>
  );
}

/* ---------- map ---------- */
const dots = [[621.5, 237.4], [666.4, 268.4], [686.4, 268.5], [708.5, 280.4], [729.5, 279.3], [752.5, 286.5], [769.6, 266.4], [777.5, 227.3], [608.5, 311.5], [648.6, 328.8], [646.4, 325.5], [695.5, 318.6], [694.6, 333.9], [801.5, 341.7], [776.6, 363.8], [746.6, 385.9]];
const cities = [[550, 405.6], [612, 405.6], [425.1, 430.9], [716.9, 295.2], [835, 340.2], [773, 427.6], [985.1, 314.2]];
const labels = [
  ["Sugar Land", 553, 401.1, 53.3, 10.8], ["Missouri City", 615.8, 401.6, 60.7, 10.8], ["Rosenberg", 427.9, 427, 48, 10.8],
  ["Houston", 722, 289.8, 50, 12.4], ["Pasadena", 838.6, 335.5, 51.7, 11.6], ["Pearland", 776.4, 423.2, 41.5, 10.8],
  ["Baytown", 988.3, 310.5, 40.9, 10.8], ["League City", 903.8, 460.9, 54, 10.8],
];
const Label = ({ t, x, y, w, s, c = "#4a4a4a" }) => (
  <text x={x} y={y} textLength={w} lengthAdjust="spacingAndGlyphs" fontSize={s} fontWeight="600" fill={c} stroke="#f3f1ea" strokeWidth="1.4" paintOrder="stroke" strokeLinejoin="round" fontFamily='"Open Sans", "Noto Sans", sans-serif'>{t}</text>
);
const ShieldText = ({ t, y, w }) => (
  <text x={-w / 2} y={y} textLength={w} lengthAdjust="spacingAndGlyphs" fontSize="9.6" fontWeight="600" fill="#5a5a5a" fontFamily='"Open Sans", sans-serif'>{t}</text>
);
const Interstate = ({ x, y, t }) => (
  <g transform={`translate(${x} ${y})`}>
    <path d="M-8.6 -9Q-5 -7.4 -3.4 -8.8Q0 -8 3.4 -8.8Q5 -7.4 8.6 -9Q9.6 -6 9.8 -2Q9.6 6 0 9.4Q-9.6 6 -9.8 -2Q-9.6 -6 -8.6 -9Z" fill="#fff" stroke="#777" />
    <path d="M-9.4 -4.4H9.4M-9.6 -3.2H9.6" stroke="#888" strokeWidth=".7" />
    <ShieldText t={t} y={5.2} w={9.4} />
  </g>
);
const UsRoute = ({ x, y, t, w }) => (
  <g transform={`translate(${x} ${y})`}>
    <path d="M-8 -8Q-5 -6.4 -3 -8Q0 -6.8 3 -8Q5 -6.4 8 -8L9.8 -6Q7.4 -2 9.4 2.6Q9.8 6.4 6.4 7Q3 6.6 0 8Q-3 6.6 -6.4 7Q-9.8 6.4 -9.4 2.6Q-7.4 -2 -9.8 -6Z" fill="#fff" stroke="#777" />
    <ShieldText t={t} y={4.4} w={w} />
  </g>
);
const StateRoute = ({ x, y, t, w, tw }) => (
  <g transform={`translate(${x} ${y})`}><rect x={-w / 2} y="-7" width={w} height="14" rx=".6" fill="#fff" stroke="#888" strokeWidth="1.1" /><ShieldText t={t} y={3.5} w={tw} /></g>
);
const MapSvg = styled.svg`
  display: block;
  width: 1026px;
  height: 273.6px;
  background: #f6f5f0;
`;
function MapView() {
  const water = "#bfe8fe";
  const urban = "#eeebe2";
  const rural = "#f6f5f0";
  const green = "#e1ead2";
  const pale = "#f0f3e4";
  return (
    <MapSvg viewBox="333 184 1026 273.6" preserveAspectRatio="none">
      {/* west */}
      <g transform="translate(327.84 155.3) scale(.22785 .19603)">
        <path fill={urban} d="M785 140V210L720 215L650 225V258L690 262L680 300L640 320L585 325V375H530V420L575 430V520L530 560L480 545L470 525L432 522L430 477H358L352 570L410 580V660L345 665L330 705L235 682L262 705V762L325 765L365 735V808H316V940H355L385 970L415 995L520 985L570 955L627 960L610 1050L560 1080L550 1150L600 1200L605 1230L575 1275L580 1310L500 1330L460 1370L400 1400L350 1440L355 1500L400 1560H720L730 1510L800 1470L870 1465L905 1430L960 1435L1000 1415L1080 1430L1090 1560H1500L1510 1500L1450 1420L1350 1400L1300 1380V1330L1568 1330L2100 1330V140Z" />
        <path fill={urban} d="M22 985H75V1130L22 1120ZM22 585L42 600V625H22Z" />
        <path fill={rural} d="M785 645L890 640V780L850 830L770 840L720 895H660L745 790L715 780L725 705L750 690ZM1295 1330H1700V1420L1400 1415L1295 1380ZM750 1480L820 1440L930 1440L1060 1420L1090 1480V1560H730Z" />
        <path fill={pale} d="M790 670L890 680V740L830 790L740 800L730 740ZM960 1430L1060 1420L1070 1480L1000 1490Z" />
        <path fill="#e9ebdc" d="M925 500H980V475L1045 480L1065 430L1080 475L1145 480V550L1105 575V605L1030 595V570L925 545Z" />
        <g stroke="#a9dbe0" strokeWidth="4.4" fill="none">
          <path d="M22 905L38 955L95 962L80 975L105 1005L120 975L175 985L192 1030L175 1055L145 1050L142 1095L150 1130L185 1185L178 1250L200 1290L215 1285L220 1220L240 1212L248 1270L305 1285L340 1255L405 1375L440 1372L505 1330L475 1280L495 1238L590 1235L575 1310L595 1340L630 1338L660 1295L690 1360L720 1345L760 1360L800 1320M22 1125L70 1135L88 1065H118L150 1108L178 1125L210 1113L272 1135L325 1100L332 1148L350 1170L382 1160L386 1132L450 1146L460 1115L430 1108L462 1085L430 1070L445 1042L470 1045L488 1020L515 1045L530 1025L575 1075L560 1045L612 1078L620 1115L680 1108L700 1155L750 1135L757 1190L810 1208L845 1200L850 1155L920 1138L895 1188L930 1190L955 1235L980 1240M1040 1275L1075 1270L1060 1300L1100 1290L1130 1360L1165 1355L1160 1405L1215 1440L1210 1470L1255 1500L1250 1541M1255 1541L1275 1520M870 1390L905 1400L910 1430L960 1460L990 1515L1050 1490L1060 1510L1085 1505L1082 1541" />
          <path d="M22 1020H38L40 985L75 980L95 962" />
        </g>
        <g fill="none">
          <path d="M22 1285L385 1400L295 1485M427 1415V1541" stroke="#dedbd4" strokeWidth="11" />
          <path stroke="#fff" strokeWidth="8" d="M1050 148L960 200L915 265L902 300V620L907 690L905 1020L910 1050L887 1095V1210L900 1235M1318 148L1440 248H1568M22 1285L385 1400L295 1485M427 1415V1541" />
        </g>
        <g stroke="#cbcbcb" strokeWidth="5.8" fill="none">
          <path d="M560 148V195L573 245L577 300V450L535 520L522 570L516 640V680L527 760V880L520 925L545 985L620 1052L695 1062L708 1080L760 1200L805 1290V1340L775 1390" />
          <path d="M22 630L640 632L780 636L1140 634L1460 640L1470 655H1568M22 658H400L415 645M210 630V665M930 150L975 165L1015 215L1155 325L1200 345M1335 430L1455 550M1175 148L1163 165L1182 250V310L1143 350L1138 400L1143 420V690L1158 735V1055L1265 1170L1345 1213M527 920L640 908L1160 862L1340 842L1370 830L1430 832M1345 845L1160 1055L1060 1165L1020 1210M1462 560L1465 640L1455 760M1443 860L1447 990L1530 998M1568 955L1530 1010L1495 1080L1375 1130L1165 1215L1080 1170L960 1185L830 1250L800 1258L630 1278L560 1330L470 1408H430M1378 1130V1165L1345 1210M897 1230L975 1277L1060 1310L1120 1370L1205 1475L1310 1500L1380 1541M970 1280L880 1340M815 1385L640 1430L510 1493L405 1497L290 1490L205 1541M380 1405L22 1450M1320 1255L1308 1330L1320 1500M1430 1262L1460 1275H1568" />
        </g>
      </g>
      {/* centre */}
      <g transform="translate(672.5 174.7) scale(.22785 .18571)">
        <path fill={urban} d="M0 45H1130L1090 200L1140 250L1100 290L1050 300L1040 340L1080 380L1120 345L1150 375L1180 410L1250 440L1270 400L1300 430L1380 440L1370 520L1420 580L1500 560L1560 450L1640 450L1650 620L1580 630L1570 700L1480 720L1460 780L1400 820L1290 830L1190 890L1330 960V1240L1215 1395L1300 1530H0Z" />
        <path fill={rural} d="M770 640L815 610L860 615L915 640L910 730L840 745L800 700L760 670ZM1005 730L1100 720L1120 770L1050 780L1010 750ZM1380 470L1460 480V545L1400 560L1370 520ZM900 300L960 290L1060 400L1000 430L960 400ZM1195 900L1290 935L1240 960L1200 930ZM1020 1170L1090 1150L1110 1200L1075 1270L1010 1260ZM0 1260L140 1250V1310L0 1300ZM240 1190L320 1180L330 1220H250ZM0 1380L130 1480L300 1490L310 1530H0ZM560 1460L580 1480L540 1530H500ZM640 1360L740 1310L790 1360L700 1430Z" />
        <path fill={pale} d="M440 95L490 100V55H810L900 60L960 90L1130 110V180L990 200L930 250L830 300L770 320L740 260L730 200L640 230L620 330L580 320L590 240L530 240L550 160L440 150ZM560 360L590 400L550 400ZM1280 55H1420L1430 180L1340 290L1290 200ZM1030 1180L1070 1170L1080 1230L1020 1250ZM650 1370L720 1345L740 1390L690 1400Z" />
        <path fill={green} d="M705 150L730 150L735 205L810 215L840 255L820 300L765 315L740 270L730 220L705 190ZM1005 660L1050 650L1080 710L1060 745L1020 700Z" />
        <path fill="#ebecdc" d="M930 60H1130L1120 110L1000 105ZM590 200H650V300L620 290ZM500 55H600L520 75Z" />
        <g fill={water}>
          <path d="M805 50H915L860 93ZM905 92L915 100V130L945 172H980L995 195L965 185L940 182L905 130ZM970 325L995 312L1018 330L1000 350L965 348Z" />
          <path d="M1000 425L1035 435L1060 418L1040 450L1045 475L1085 480L1108 520L1090 545L1090 560L1130 585L1152 605L1150 650L1135 680L1160 690L1190 692L1200 720L1220 750L1220 780L1280 820L1380 860L1440 850L1480 860L1470 890L1460 940L1510 1015L1568 1018H1700V1530H1300L1215 1400L1320 1220L1290 1180L1240 1150L1232 1080L1270 1000L1330 945L1250 930L1300 905L1220 875L1195 855L1110 840V795L1150 765L1085 738L1075 690L1045 650L1010 655L1000 685L960 715L880 760L835 740L800 720L780 695L700 720L680 765L650 780L560 805L530 780L480 785L425 690L435 690L490 775L540 775L560 785L640 765L660 730L700 710L780 690L800 705L850 740L900 735L960 705L990 670L945 650L1000 660L1010 640L985 635L980 570L1070 550L1085 530L1040 510L1000 495Z" />
          <path d="M1040 1270L1065 1275L1085 1310L1070 1350L1150 1365L1190 1405L1120 1415L1075 1400L1040 1460L1028 1420L1070 1390L1060 1350L1065 1310ZM1200 1190L1225 1186V1198ZM1465 820L1475 850L1520 900L1510 950L1480 960L1460 900Z" />
        </g>
        <path fill={rural} d="M990 580L1052 572L1045 628L990 630ZM1150 775L1202 780L1200 835L1150 838ZM1400 1138L1435 1132L1448 1168L1415 1175ZM1342 930L1365 935L1395 1090L1385 1070ZM1280 870L1345 900L1335 915Z" />
        <path fill="#dedad0" d="M990 1315L1050 1350L1048 1395L990 1415L965 1390L970 1350Z" />
        <g stroke="#9edbdd" strokeWidth="4" fill="none">
          <path d="M1285 55L1310 100L1325 200L1345 225L1375 295L1430 310L1450 370L1480 390L1530 390L1545 450L1500 510L1520 550L1510 600L1530 630L1490 690M1375 295L1450 285L1475 225L1568 170" />
        </g>
        <g stroke="#fff" strokeWidth="8.6" fill="none">
          <path d="M485 510L525 460L730 355L935 245L985 238M0 157H65M370 785L490 830M425 890L440 1100L440 1360L520 1525M505 975L575 980L640 1060L980 1525M570 1080L640 1052L1190 1043M568 1090L545 1160L548 1215M1130 545L1215 590L1315 690L1390 680L1490 650L1520 600L1568 460M1315 690L1295 740L1290 810L1270 825M150 740L165 710L190 740" />
        </g>
        <g stroke="#c8c8c8" strokeWidth="6" fill="none">
          <path d="M70 55V235L80 270M145 375L180 450L195 560L205 625M395 55L370 130L305 275L297 340V475M285 470L285 620L215 715L185 750L170 810L180 860L160 960L145 1020V1525M0 468L200 460L300 478L420 480L490 525L505 600L495 830L430 880L350 882L250 935L20 952M690 55L685 180L730 260L735 350L795 440L800 520L850 650V730L825 880L818 1060L765 1130L680 1205L650 1228L340 1230L0 1243M1165 55L1095 200L1070 220M985 290L760 390L690 435L535 590M0 587L130 590M440 585L650 615L830 610L960 570L1075 528L1120 545L1190 518L1440 470L1500 440H1568M490 525L440 590L415 660L360 800L350 830L130 880M495 838L580 848L640 832L730 830M960 835L1170 912M180 680L350 810L430 880M510 985L570 1085L670 1210L780 1345L890 1480L912 1525M1270 822L1190 905V1050L1178 1160L1195 1290M1200 1370L1215 1440L1245 1500M1270 822H1310L1390 795L1460 798L1500 772H1568M1480 55L1485 110L1540 175L1560 250M0 765L180 750M60 900L20 955L0 1000M290 775L303 830" />
          <path d="M172 55L240 440" strokeWidth="3" />
        </g>
      </g>
      {/* east */}
      <g transform="translate(1008.7 155.3) scale(.22785 .21047)">
        <path fill={pale} d="M170 140L300 135V190L430 250L520 200L560 250H500L540 330L330 340L250 320L165 280ZM480 130H840L1010 240V300L910 310L1000 400V480L830 530L835 400L700 420L560 400L600 200ZM180 720H240L230 790L180 860L90 850V780H165ZM875 840H1000L1030 900L930 980L850 940ZM900 1200L970 1190L990 1140L1030 1200Z" />
        <path fill={green} d="M300 135H480L430 160L440 230L340 235L330 210L360 190L320 180ZM1340 938H1495V1060L1540 1080V1230H1516L1500 1270L1365 1310L1265 1350L1205 1360L1120 1262L1060 1240L1040 1080L1075 1082V1100H1133V1012L1103 1008V985L1140 990V1012L1162 1015V1072L1205 1080L1215 1120L1245 1160V1190L1278 1225L1275 1250L1300 1225L1345 1225ZM625 1315H700V1293L775 1290V1268L808 1245V1345L640 1378ZM1370 1320L1460 1300V1400H1415Z" />
        <path fill={urban} d="M245 480L290 465L360 475L355 510L330 555L300 570L285 540L240 535ZM310 250L345 235L440 270L330 300L240 340L250 315L185 325L200 290L240 300Z" />
        <g fill={water}>
          <path d="M-175 1437L-60 1437V1020L25 990H85L165 950L195 900V870L225 800L320 700L335 688L290 688L280 635L300 600L345 575L390 570L398 600L390 645L470 615L570 575L612 580L600 625L640 645L690 680L710 690L695 760L710 820V890L690 990L680 1060L645 1150L600 1210L565 1265L530 1295L535 1325L495 1370L425 1348L450 1395L490 1413L700 1370L820 1340L950 1305L1075 1258L1130 1265L1170 1310L1205 1358L1265 1350L1310 1325L1365 1310L1490 1275L1512 1220L1516 1250L1500 1285L1400 1310L1360 1345L1300 1437Z" />
          <path d="M650 495L670 470L710 460L760 465L800 505V550L770 600L720 622L680 600L665 550ZM405 325L425 315L445 330L450 360L475 370L480 395L460 385L450 372L425 380L405 365ZM375 380L385 385L388 430L415 450L410 490L440 510L500 495L555 525L550 532L505 505L435 530L400 480L385 440ZM480 385L515 368L505 385ZM555 250L562 260L550 335L545 330ZM1350 1437L1440 1400L1540 1360V1437ZM0 905L30 880L48 890L30 920L10 945L35 990L0 970ZM590 500L605 515L595 520Z" />
        </g>
        <path fill={rural} d="M1015 1437L1060 1398L1130 1415L1150 1437ZM598 655L612 640L632 655L620 675L600 665Z" />
        <g stroke="#b6dfe2" strokeWidth="4" fill="none">
          <path d="M218 140L140 215L60 250L0 290M480 140L490 180L525 180L480 195L485 210L540 195L550 250L562 260L548 350L535 395L500 410L495 430L510 445L540 430L560 470L605 520L600 540L712 632L690 700M960 140L988 195L960 245L975 290L960 315L920 335V360M1150 140L1207 178L1215 280L1192 310V400L1105 393M1192 400L1285 440L1315 455L1390 465L1465 540V515L1440 490L1418 445L1420 420L1407 390V325L1383 288L1345 340L1335 370L1315 380M1383 288L1402 258H1418L1460 205H1485L1480 185L1515 140M1240 140L1293 200V260H1263L1268 440M1240 300L1235 325L1217 335L1245 355V410L1290 440M1118 505L1100 668L1070 685L1035 720L1020 765L965 815L918 840L898 930L865 940L830 1000L798 1020L742 1027L705 1008L772 975V890L795 850L780 815L790 800L775 780L800 750L820 745L830 710L855 690V675L910 652M1225 440L1237 475M830 400L795 430L770 445L765 465M0 425L30 440L68 465L70 490L50 510L25 550L40 600L35 640L40 680L0 700" />
        </g>
        <g fill="none">
          <path d="M97 140L113 310L105 430L80 530L45 640L15 672H0M933 140V265L895 325V360M830 425L853 582L1190 575M1268 573L1540 566" stroke="#dedbd4" strokeWidth="13" />
          <path d="M97 140L113 310L105 430L80 530L45 640L15 672H0M933 140V265L895 325V360M830 425L853 582L1190 575M1268 573L1540 566" stroke="#fff" strokeWidth="8" />
          <path d="M0 492L60 478L200 465L430 438L505 420L835 410M930 422L1390 453H1540M5 140V175L25 215L68 245L78 305L165 352L178 430L207 495L175 580V735L155 765L20 772L0 790" stroke="#c2c2c2" strokeWidth="6" />
        </g>
      </g>
      {cities.map(([x, y]) => <circle key={x} cx={x} cy={y} r="2.6" fill="#fff" stroke="#777" strokeWidth=".9" />)}
      {labels.map(([t, x, y, w, s]) => <Label key={t} t={t} x={x} y={y} w={w} s={s} c={s > 12 ? "#333" : undefined} />)}
      <Label t="Anahuac" x={1318.4} y={388.9} w={39} s={9.8} c="#667f58" />
      <Label t="National" x={1318.8} y={399.9} w={38} s={9.8} c="#667f58" />
      <Label t="Wildlife Refuge" x={1303.1} y={410.8} w={68} s={9.8} c="#667f58" />
      <Interstate x={432} y={278.2} t="10" /><Interstate x={701} y={235.4} t="45" /><Interstate x={665} y={314.5} t="69" />
      <Interstate x={782} y={347.4} t="45" /><Interstate x={522} y={419} t="69" /><Interstate x={1209.9} y={239.9} t="10" />
      <UsRoute x={611} y={227.8} t="290" w={14} /><UsRoute x={907} y={221} t="90" w={9.6} />
      <StateRoute x={534} y={348.4} t="6" w={13} tw={4.8} /><StateRoute x={1289} y={275.2} t="65" w={16.6} tw={10} /><StateRoute x={945} y={419.8} t="146" w={21} tw={15} />
      {dots.map(([x, y]) => <circle key={x + "," + y} cx={x} cy={y} r="6.4" fill="#e60000" stroke="#000" strokeWidth="1.1" />)}
      <path d="M1331.6 434V449H1335V447H1337.6V449H1340.6V447H1343.4V449H1346V447H1348.6V449H1352V434H1343L1341.4 432.4H1334L1332.6 434Z" fill="#fff" stroke="#777" strokeWidth="1.2" />
      <path d="M1335 439.4H1348.6M1335 443.2H1348.6" stroke="#777" strokeWidth=".9" />
    </MapSvg>
  );
}

/* ---------- right side ---------- */
const Docks = styled.div`
  width: 1028px;
  display: flex;
  flex-direction: column;
`;
const DockTabs = styled.div`
  height: ${(p) => p.$h}px;
  flex: none;
  display: flex;
  align-items: stretch;
  border-bottom: ${(p) => p.$line};
`;
const DockTab = styled.div`
  width: ${(p) => p.$w}px;
  display: flex;
  align-items: center;
  padding: ${(p) => p.$pt}px 0 0 6.4px;
  border-radius: 3px 3px 0 0;
  background: ${(p) => p.$bg};
  color: ${(p) => p.$fg};
`;
const DockMenu = styled.div`
  margin-left: auto;
  padding: ${(p) => p.$pt}px 5.6px 0 0;
`;
const MapFrame = styled.div`
  border: solid #cfd0d4;
  border-width: 0 1px 1px 1px;
  background: #f8f8f8;
`;
const MapBar = styled.div`
  height: 24.4px;
  display: flex;
  align-items: center;
  padding: 0.8px 0 0 5px;
`;
const ScaleBox = styled.div`
  width: 99.8px;
  height: 21.6px;
  border: 1px solid #8a8a8a;
  background: #fff;
  display: flex;
  align-items: center;
  padding: 0.6px 0 0 5.7px;
`;
const TableDock = styled.div`
  margin-top: 6.4px;
  display: flex;
  flex-direction: column;
`;
const TableFrame = styled.div`
  height: 211px;
  border: solid #cfd0d4;
  border-width: 0 0.8px 0.8px 0.8px;
  background: #f8f8f8;
  padding: 1.6px 1.2px 0;
  display: flex;
  flex-direction: column;
`;
const FieldBar = styled.div`
  height: 29.6px;
  flex: none;
  background: #eef0f2;
  border: 0.9px solid #c6c8cc;
  display: flex;
  align-items: center;
  padding: 0 0 1.2px 5.8px;
  margin-bottom: 1.4px;
`;
const Off = "#bdbdbd";
const GridArea = styled.div`
  height: 150px;
  flex: none;
  border: 0.8px solid #cfcfcf;
  display: flex;
`;
const GridLeft = styled.div`
  flex: 1;
  display: flex;
  flex-direction: column;
`;
const GridView = styled.div`
  height: 131.6px;
  overflow: hidden;
  background: #fff;
`;
const cols = "23px 26.1px 41px 18.8px 57.2px 52.1px 134.2px";
const GridRow = styled.div`
  display: grid;
  width: max-content;
  grid-template-columns: ${cols};
  height: ${(p) => p.$h || 25}px;
`;
const Cell = styled.div`
  display: flex;
  align-items: center;
  justify-content: ${(p) => (p.$right ? "flex-end" : "flex-start")};
  padding: 0 4.6px;
  border: solid #c9c9c9;
  border-width: 0 0.9px 0.9px 0;
  background: ${(p) => p.$bg};
  color: #444;
`;
const HeadCell = styled(Cell)`
  border-bottom: ${(p) => (p.$mark ? "2.4px solid #0072bc" : "0.9px solid #c9c9c9")};
  padding-top: ${(p) => (p.$mark ? 3.4 : 1.9)}px;
`;
const IndexCell = styled(Cell)`
  border-right: ${(p) => (p.$mark ? "2px solid #0072bc" : "0.9px solid #c9c9c9")};
`;
const HScroll = styled.div`
  flex: 1;
  background: #f4f4f4;
  display: flex;
  align-items: center;
  justify-content: space-between;
  padding: 0.6px 5.6px 0 7px;
`;
const VScroll = styled.div`
  width: 17.2px;
  background: #ebebeb;
  display: flex;
  flex-direction: column;
  align-items: center;
  padding-top: 7px;
`;
const Thumb = styled.div`
  width: 9px;
  height: 24px;
  margin: 8.2px 0 77.4px;
  border-radius: 4.5px;
  background: #a6a6a6;
`;
const StatusBar = styled.div`
  flex: 1;
  display: flex;
  align-items: center;
  padding-top: 1.2px;
`;
const ViewToggle = styled.div`
  width: 31.4px;
  height: 22.6px;
  border: 1px solid #4fb2e6;
  background: #c0c4ca;
  display: grid;
  place-items: center;
`;
const FilterPair = styled.div`
  width: 42px;
  height: 23.6px;
  margin-left: 5.4px;
  background: #eef0f2;
  display: flex;
  align-items: center;
  gap: 5px;
  padding-left: 4px;
`;
const Track = styled.div`
  width: 100px;
  height: 11.4px;
  margin-left: 7.6px;
  display: flex;
  align-items: center;
`;
const TrackPart = styled.div`
  width: ${(p) => p.$w}px;
  height: ${(p) => p.$h}px;
  background: ${(p) => p.$c};
`;
const ZoomBox = styled.div`
  width: 60px;
  height: 22.4px;
  margin-left: 7px;
  background: #fff;
  display: flex;
  align-items: center;
  padding: 0.8px 0 0 7px;
`;

const records = [
  ["1", "0", "0", "-1,98", "Water Service", 68.6],
  ["2", "1", "1", "-5,87", "Missed Garbage Pickup", 119],
  ["3", "2", "2", "-7,77", "Water Leak", 56.6],
  ["4", "3", "3", "-1,99", "Water Service", 68.6],
];
const headings = [["FID", 16.4], ["Shape", 31.6], ["Id", 9.4], ["record_id", 47.3], ["overdue", 42.7], ["sr_type", 37]];

function MapDock() {
  return (
    <>
      <DockTabs $h={24.2} $line="2.6px solid #0074c8">
        <DockTab $w={77.4} $pt={2.4} $bg="#007ac9" $fg="#fff"><MiniMap s={15.4} /><T ml={5.3} w={23.6}>Map</T><Cross ml={9.6} s={9.6} c="#b8dcf4" /></DockTab>
        <DockMenu $pt={9.2}><Chev w={7.6} h={5} sw={1.6} c="#777" /></DockMenu>
      </DockTabs>
      <MapFrame>
        <MapView />
        <MapBar>
          <ScaleBox><T w={47.5} color="#222">1:631.228</T><TriDown ml={36} /></ScaleBox>
          <Separator $h={15} $ml={3.8} $c="#999" />
          <I ml={6.6} mt={-2}><path d="M.6 .6H10.6V5.6H.6ZM.6 5.6H5.6V10.6H.6ZM5.6 .6V5.6" fill="#fff" stroke="#888" strokeWidth="1.1" /><path d="M11.5 7V16M7 11.5H16" stroke="#a8dcf8" strokeWidth="3" /><path d="M11.5 7V16M7 11.5H16" stroke="#3d86b4" strokeWidth="1.2" /></I>
          <I ml={5} mt={-2} w={13}><path d="M.5 .5H12.5V12.5H.5ZM3.5 .5V12.5M6.5 .5V12.5M9.5 .5V12.5M.5 3.5H12.5M.5 6.5H12.5M.5 9.5H12.5" stroke="#999" /></I>
          <I ml={6} mt={-1}><path d="M4 14L12 8L15.5 14Z" fill="#c6e6f8" /><path d="M2 13.6H15.5M3 10L11 3M4 8L6 6" stroke={BL} strokeWidth="1.2" strokeDasharray="3 1" /><rect x=".6" y="2" width="3.6" height="3" stroke={G} strokeWidth="1.1" fill="#fff" /><rect x="11.4" y="8.6" width="3.6" height="3" stroke={G} strokeWidth="1.1" fill="#fff" /><path d="M12.6 .6V5.4M10.2 3H15" stroke={G} strokeWidth="1.2" /><rect x=".6" y="12.4" width="2.4" height="2.6" stroke="#3c8c3c" fill="#6ab06a" /></I>
          <I ml={4} mt={-1}><rect width="8" height="8" fill="#d6ecd4" /><path d="M8 0V16M0 8H16" stroke="#888" strokeDasharray="1.4 1" strokeWidth="1.4" /><rect x="6.4" y="6.4" width="3.2" height="3.2" fill="#888" /></I>
          <I ml={4} mt={-1}><path d="M1 10.5V3.6L5 10.5V3.6" stroke={BL} strokeWidth="1.8" /><path d="M7.8 0V16" stroke="#777" strokeWidth="1.2" /><path d="M8 15.6L16 8" stroke="#999" /><path d="M10 2Q14 3 13.4 7M11 5L13.4 7.6L15.8 5" stroke={BL} strokeWidth="1.3" /></I>
          <Chev ml={6.2} mt={1.4} w={8} h={5.4} sw={1.9} c="#222" />
          <Separator $h={15} $ml={9} $c="#888" />
          <T ml={198.8} w={146.2} color="#444">94,6585621°W 29,8935199°N</T>
          <Chev ml={11.5} mt={0.4} w={8.6} h={6} sw={1.9} />
          <Separator $h={15} $ml={198.8} $c="#999" />
          <ZoomSel color ml={7.1} /><T ml={4.4} w={102.4} color="#9c9c9c">Selected Features: 0</T>
          <Separator $h={15} $ml={7.2} $c="#999" />
          <I ml={8.6} w={12}><Poly s={0.6} gray /></I>
          <Separator $h={15} $ml={9.6} $c="#aaa" />
          <I ml={7.6} w={11} h={14}><rect width="4.2" height="14" fill={G} /><rect x="6.6" width="4.2" height="14" fill={G} /></I>
          <Separator $h={15} $ml={9.2} $c="#aaa" />
          <Refresh ml={5.8} />
        </MapBar>
      </MapFrame>
    </>
  );
}

function Attributes() {
  return (
    <TableDock>
      <DockTabs $h={24.4} $line="2.2px solid #d0d1d6">
        <DockTab $w={71} $pt={1.6} $bg="#d0d1d6" $fg="#4a4a4a"><I w={15} h={13.4} mt={-0.8}><Grid x={0.5} y={0.5} w={14} h={12.6} /></I><T ml={6} w={17}>311</T><Cross ml={10.2} s={9.8} c="#666" /></DockTab>
        <DockMenu $pt={9.2}><Chev w={7.6} h={5} sw={1.5} c="#777" /></DockMenu>
      </DockTabs>
      <TableFrame>
        <FieldBar>
          <T w={28.7} weight={600}>Field:</T>
          <I ml={7.9} w={15}><Grid x={0.5} y={1} w={14} h={11} /><rect x="2.6" y="9" width="7" height="7" fill="#eef0f2" /><path d="M5 9V15.4M1.8 12.2H8.2" stroke="#555" strokeWidth="1.6" /></I>
          <T ml={4.4} w={21.2}>Add</T>
          <I ml={10.6} w={15}><Grid x={0.5} y={1} w={14} h={11} /><rect x="4.4" y="9" width="8" height="7" fill="#eef0f2" /><path d="M6 11.4H11M6 14.4H11" stroke="#555" strokeWidth="1.5" /></I>
          <T ml={4.4} w={48.5}>Calculate</T>
          <Separator $h={21.6} $ml={9.6} $c="#c8cacc" />
          <T ml={7} w={55} weight={600}>Selection:</T>
          <I ml={8}><Poly x={0} y={0} s={0.5} /><Grid x={6.6} y={7} w={9} h={8.6} cols={3} rows={3} /></I>
          <T ml={3.6} w={101.1}>Select By Attributes</T>
          <I ml={10.4} w={16}><g opacity=".75"><Rows x={5.6} w={10} h={8.6} c={LG} fills={["#fff", "#fff", "#fff", "#d8f0f4"]} /><circle cx="4.2" cy="8.8" r="3.9" fill="#fff" stroke="#98c8e4" strokeWidth="1.1" /><path d="M2 8.8H6.4M4.2 6.6V11" stroke="#999" /><path d="M7 12L11 16" stroke="#dcb890" strokeWidth="1.8" /></g></I>
          <T ml={3} w={46.5} color={Off}>Zoom To</T>
          <I ml={10}><Rows w={9.6} h={6.4} c={G} fills={["#fff", "#fff", "#7fc4d0"]} /><Rows x={6} y={8.8} w={9.6} h={6.4} c={G} fills={["#7fc4d0", "#7fc4d0", "#fff"]} /><path d="M11.4 1.6Q14 2 14 6.6M12 4.8L14 7.4L16 4.8M4.6 15Q2.2 14 2.2 9.4M.2 11.6L2.2 9L4.2 11.6" stroke={G} strokeWidth="1.3" /></I>
          <T ml={3.2} w={34.4} color="#2b2b2b">Switch</T>
          <I ml={10.4} w={15} h={13}><Rows w={15} h={12.4} c={LG} fills={["#fff", "#fff", "#fff", "#fff"]} /></I>
          <T ml={5} w={26.2} color={Off}>Clear</T>
          <I ml={10} w={15}><Rows w={15} h={12.4} y={1} c={LG} fills={["#fff", "#fff", "#d4f0f6", "#d4f0f6"]} /><rect x="1" y="9.6" width="7.4" height="6.4" fill="#eef0f2" /><path d="M1.8 9.8L7.8 15.6M7.8 9.8L1.8 15.6" stroke="#e0a898" strokeWidth="1.7" /></I>
          <T ml={4.6} w={32.6} color={Off}>Delete</T>
          <I ml={10}><Rows x={3} w={13} h={9.6} c={LG} fills={["#d4f0f6", "#fff", "#fff"]} /><Rows y={6} w={13} h={9.6} c={LG} fills={["#d4f0f6", "#fff", "#d4f0f6"]} /></I>
          <T ml={3.8} w={27} color={Off}>Copy</T>
          <I ml={322.4} w={14} h={11}><path d="M0 1.4H14M0 5.4H14M0 9.4H14" stroke="#555" strokeWidth="2.2" /></I>
        </FieldBar>
        <GridArea>
          <GridLeft>
            <GridView>
              <GridRow $h={24.6}>
                <HeadCell $bg="#fff" $right><I w={9.6} mt={5}><path d="M9.6 0V9.6H0Z" fill="#c9c9c9" /></I></HeadCell>
                {headings.map(([t, w]) => (
                  <HeadCell key={t} $mark={t === "FID"} $bg={t === "FID" ? "#c5e2f6" : "#ebebeb"}><T w={w} weight={600} fs={12}>{t}</T></HeadCell>
                ))}
              </GridRow>
              {records.map(([n, fid, rec, due, type, w], i) => {
                const bg = i % 2 ? "#ebebeb" : "#fff";
                const sel = i === 0;
                return (
                  <GridRow key={n}>
                    <IndexCell $mark={sel} $bg={sel ? "#c5e2f6" : "#ebebeb"}><T w={5}>{n}</T></IndexCell>
                    <Cell $bg={sel ? "#c5e2f6" : bg}><T w={5.4}>{fid}</T></Cell>
                    <Cell $bg={bg}><T w={26.3}>Point</T></Cell>
                    <Cell $bg={bg} $right><T w={5.4}>0</T></Cell>
                    <Cell $bg={bg} $right><T w={5.4}>{rec}</T></Cell>
                    <Cell $bg={bg} $right><T w={24}>{due}</T></Cell>
                    <Cell $bg={bg}><T w={w}>{type}</T></Cell>
                  </GridRow>
                );
              })}
              <GridRow>
                <IndexCell $bg="#ebebeb" /><Cell $bg="#fff" /><Cell $bg="#fff" /><Cell $bg="#fff" /><Cell $bg="#fff" /><Cell $bg="#fff" /><Cell $bg="#fff" />
              </GridRow>
            </GridView>
            <HScroll>
              <I w={4} h={6.4}><path d="M3.6 .2L.6 3.2L3.6 6.2" stroke="#ccc" /></I>
              <I w={4} h={6.4}><path d="M.4 .2L3.4 3.2L.4 6.2" stroke="#ccc" /></I>
            </HScroll>
          </GridLeft>
          <VScroll>
            <I w={7} h={4.4}><path d="M.5 4L3.5 .8L6.5 4" stroke="#777" strokeWidth="1.2" /></I>
            <Thumb />
            <Chev w={7} h={4.4} sw={1.2} c="#777" />
          </VScroll>
        </GridArea>
        <StatusBar>
          <ViewToggle><I w={16} h={13}><Rows w={16} h={12} fills={["#fff", "#b4ecf8", "#fff", "#b4ecf8"]} /></I></ViewToggle>
          <I ml={10.4} w={15.6} h={10} mt={-4}><Rows w={15.6} h={9.4} fills={["#b4ecf8", "#b4ecf8", "#b4ecf8"]} /></I>
          <I ml={17.8} w={9.6} h={8.6}><path d="M.6 0V8.6" stroke="#bbb" strokeWidth="1.2" /><path d="M9.2 0V8.6L2.4 4.3Z" fill="#bbb" /></I>
          <I ml={13.4} w={9.6} h={8.6}><path d="M8.8 0V8.6" stroke={G} strokeWidth="1.2" /><path d="M0 0V8.6L7 4.3Z" fill={G} /></I>
          <T ml={12.7} w={80.6}>0 of 16 selected</T>
          <T ml={458.5} w={32.8}>Filters:</T>
          <FilterPair>
            <I w={15.4} o={0.8}><circle cx="7.7" cy="7.7" r="7.1" stroke="#d0d4d8" fill="#eaf2f6" /><path d="M7.7 3.6V8H10.6" stroke="#b8c4cc" strokeWidth="1.2" /><path d="M11 4Q13 7 12 11L9.4 12Z" fill="#d6e8d8" /></I>
            <I w={15.4} o={0.8}><path d="M9 .8Q15 2.4 14.8 8Q14 14.6 7.8 14.8Q2 14.4 1 9" stroke="#d0d4d8" /><path d="M1.6 1V6M5 0V7M8.6 1V6M.4 4.4H3M3.8 3H6.4M7.4 4.4H10" stroke="#b4d2e4" /><path d="M9 8L13 6Q13 11 8 13Z" fill="#d6e8d8" /></I>
          </FilterPair>
          <I ml={4} w={16.6} h={15.6}><path d="M.7 .8H13V2.6L8.4 8L8 15.4H6L5.2 8L.7 2.6Z" fill="#b0b0b0" stroke={G} strokeWidth="1.2" /><path d="M1.4 1.6H12.2" stroke="#fff" strokeWidth=".9" /><rect x="8.2" y="7.4" width="8" height="8.4" fill="#f8f8f8" /><rect x="9.2" y="8.4" width="6" height="6.6" stroke="#2f8fd0" strokeWidth="1.8" strokeDasharray="1.7 1" /></I>
          <Separator $h={15} $ml={2} $c="#999" />
          <I ml={6.2} w={9} h={15}><path d="M4.5 1V7M.8 4.6L4.5 .8L8.2 4.6" stroke="#b2cfb2" strokeWidth="2.2" /><path d="M4.5 8V14M.8 10.4L4.5 14.2L8.2 10.4" stroke="#f2cfa4" strokeWidth="2.2" /></I>
          <I ml={15.4} w={6.2} h={2}><path d="M0 1H6.2" stroke="#444" strokeWidth="2" /></I>
          <Track><TrackPart $w={48.4} $h={3} $c="#a2a2a2" /><TrackPart $w={3} $h={11.4} $c="#777" /><TrackPart $w={48.6} $h={3} $c="#dcdcdc" /></Track>
          <I ml={6.8} w={8.2}><path d="M4.1 0V8.2M0 4.1H8.2" stroke="#444" strokeWidth="1.7" /></I>
          <ZoomBox><T w={27.3} color="#333">100%</T><TriDown ml={15.8} /></ZoomBox>
          <Separator $h={15} $ml={5} $c="#aaa" />
          <Refresh ml={7} />
        </StatusBar>
      </TableFrame>
    </TableDock>
  );
}

export default function App() {
  return (
    <Display>
      <Global />
      <Window>
        <Top />
        <Workspace>
          <Contents />
          <Docks>
            <MapDock />
            <Attributes />
          </Docks>
        </Workspace>
      </Window>
    </Display>
  );
}
